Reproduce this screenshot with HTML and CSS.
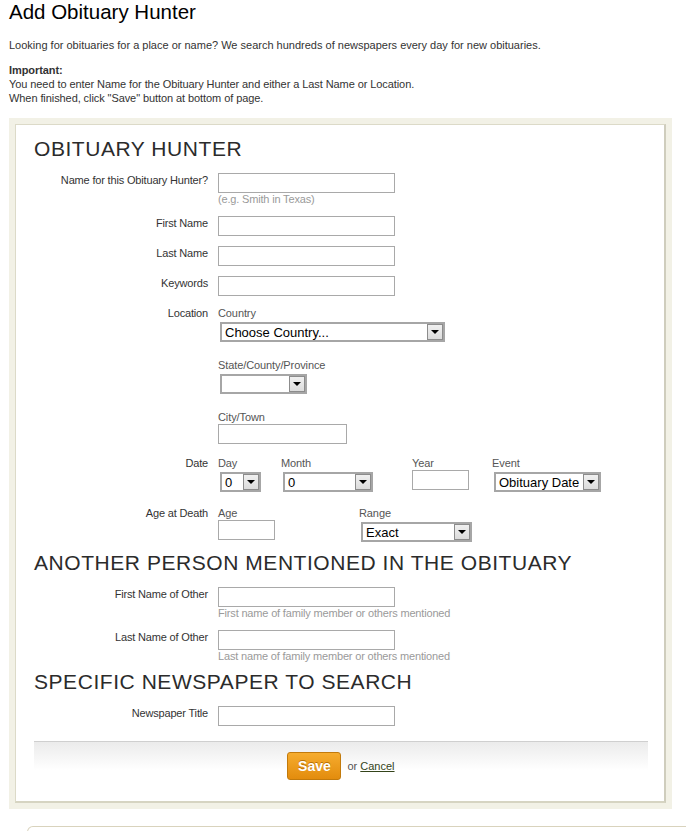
FILE: index.html
```html
<!DOCTYPE html>
<html lang="en">
<head>
<meta charset="utf-8">
<title>Add Obituary Hunter</title>
<link rel="stylesheet" href="styles.css">
</head>
<body>
<div class="page">
  <h1 class="title">Add Obituary Hunter</h1>
  <p class="intro">Looking for obituaries for a place or name? We search hundreds of newspapers every day for new obituaries.</p>
  <p class="important"><strong>Important:</strong><br>You need to enter Name for the Obituary Hunter and either a Last Name or Location.<br>When finished, click "Save" button at bottom of page.</p>

  <div class="frame">
    <div class="panel">
      <h2 class="sec">OBITUARY HUNTER</h2>

      <div class="row first">
        <label class="lbl">Name for this Obituary Hunter?</label>
        <div class="field">
          <input type="text" class="txt w-name">
          <div class="hint">(e.g. Smith in Texas)</div>
        </div>
      </div>

      <div class="row">
        <label class="lbl">First Name</label>
        <div class="field"><input type="text" class="txt w-name"></div>
      </div>

      <div class="row">
        <label class="lbl">Last Name</label>
        <div class="field"><input type="text" class="txt w-name"></div>
      </div>

      <div class="row">
        <label class="lbl">Keywords</label>
        <div class="field"><input type="text" class="txt w-name"></div>
      </div>

      <div class="row">
        <label class="lbl">Location</label>
        <div class="field">
          <div class="group">
            <div class="sub">Country</div>
            <span class="select w-country"><span class="val">Choose Country...</span><span class="btn"></span></span>
          </div>
          <div class="group gap">
            <div class="sub">State/County/Province</div>
            <span class="select w-state"><span class="val"></span><span class="btn"></span></span>
          </div>
          <div class="group gap">
            <div class="sub">City/Town</div>
            <input type="text" class="txt w-city">
          </div>
        </div>
      </div>

      <div class="row wide">
        <label class="lbl">Date</label>
        <div class="field cols">
          <div class="col c-day">
            <div class="sub">Day</div>
            <span class="select w-day"><span class="val">0</span><span class="btn"></span></span>
          </div>
          <div class="col c-month">
            <div class="sub">Month</div>
            <span class="select w-month"><span class="val">0</span><span class="btn"></span></span>
          </div>
          <div class="col c-year">
            <div class="sub">Year</div>
            <input type="text" class="txt w-year">
          </div>
          <div class="col">
            <div class="sub">Event</div>
            <span class="select w-event"><span class="val">Obituary Date</span><span class="btn"></span></span>
          </div>
        </div>
      </div>

      <div class="row wide">
        <label class="lbl">Age at Death</label>
        <div class="field cols">
          <div class="col c-age">
            <div class="sub">Age</div>
            <input type="text" class="txt w-age">
          </div>
          <div class="col">
            <div class="sub">Range</div>
            <span class="select w-range"><span class="val">Exact</span><span class="btn"></span></span>
          </div>
        </div>
      </div>

      <h2 class="sec next">ANOTHER PERSON MENTIONED IN THE OBITUARY</h2>

      <div class="row first">
        <label class="lbl">First Name of Other</label>
        <div class="field">
          <input type="text" class="txt w-name">
          <div class="hint">First name of family member or others mentioned</div>
        </div>
      </div>

      <div class="row">
        <label class="lbl">Last Name of Other</label>
        <div class="field">
          <input type="text" class="txt w-name">
          <div class="hint">Last name of family member or others mentioned</div>
        </div>
      </div>

      <h2 class="sec next">SPECIFIC NEWSPAPER TO SEARCH</h2>

      <div class="row first">
        <label class="lbl">Newspaper Title</label>
        <div class="field"><input type="text" class="txt w-name"></div>
      </div>

      <div class="actions">
        <button type="button" class="save">Save</button>
        <span class="or">or <a href="#" class="cancel">Cancel</a></span>
      </div>
    </div>
  </div>

  <div class="next-box"></div>
</div>
</body>
</html>
```

FILE: styles.css
```css
html, body {
  margin: 0;
  padding: 0;
  overflow: hidden;
  background: #fff;
}

body {
  font-family: "Liberation Sans", Arial, sans-serif;
  font-size: 11px;
  color: #333;
}

.page {
  padding-left: 9px;
}

.title {
  margin: 0;
  font-size: 20.5px;
  font-weight: normal;
  line-height: 24px;
  color: #000;
}

.intro {
  margin: 14px 0 0;
  line-height: 14px;
}

.important {
  margin: 11px 0 13px;
  line-height: 14px;
  letter-spacing: -0.08px;
}

.important strong {
  color: #333;
}

.frame {
  margin-right: 14px;
  padding: 6px;
  background: #f2f1e6;
}

.panel {
  background: #fff;
  border-top: 1px solid #dcdac8;
  border-left: 1px solid #dcdac8;
  border-right: 2px solid #cfcdbd;
  border-bottom: 2px solid #d6d4c2;
  padding: 12px 16px 21px 18px;
}

.sec {
  margin: 0;
  font-size: 21px;
  font-weight: normal;
  letter-spacing: 0.55px;
  line-height: 24px;
  color: #2b2b2b;
}

.sec.next {
  margin-top: 7px;
}

.row {
  display: grid;
  grid-template-columns: 174px 1fr;
  column-gap: 10px;
  margin-top: 10px;
}

.row.first {
  margin-top: 12px;
}

.row.wide {
  margin-top: 12px;
}

.lbl {
  text-align: right;
  line-height: 14px;
  color: #333;
  letter-spacing: -0.17px;
}

.field {
  min-width: 0;
}

.txt {
  display: block;
  box-sizing: border-box;
  height: 20px;
  margin: 0;
  padding: 0 3px;
  border: 1px solid #a9a9a9;
  background: #fff;
  font: 13px "Liberation Sans", Arial, sans-serif;
  outline: none;
}

.w-name { width: 177px; }
.w-city { width: 129px; }
.w-year { width: 57px; }
.w-age { width: 57px; }

.hint {
  line-height: 13px;
  color: #9a9a9a;
  letter-spacing: -0.17px;
}

.sub {
  line-height: 14px;
  color: #555;
  letter-spacing: -0.1px;
}

.group.gap {
  margin-top: 16px;
}

.select {
  display: flex;
  align-items: stretch;
  box-sizing: border-box;
  height: 20px;
  margin: 2px 0 2px 2px;
  border: 2px solid #a6a6a6;
  background: #fff;
  font-size: 13px;
  color: #000;
}

.select .val {
  flex: 1;
  padding-left: 3px;
  line-height: 17px;
  white-space: nowrap;
  overflow: hidden;
}

.select .btn {
  position: relative;
  width: 14px;
  margin: 0;
  border: 1px solid #8c8c8c;
  background: linear-gradient(#f0f0f0, #dcdcdc);
}

.select .btn::after {
  content: "";
  position: absolute;
  left: 3px;
  top: 5px;
  border-left: 4px solid transparent;
  border-right: 4px solid transparent;
  border-top: 4px solid #000;
}

.w-country { width: 225px; }
.w-state { width: 87px; }
.w-day { width: 41px; }
.w-month { width: 90px; }
.w-event { width: 107px; }
.w-range { width: 111px; }

.cols {
  display: flex;
  align-items: flex-start;
}

.c-day { width: 63px; }
.c-month { width: 131px; }
.c-year { width: 80px; }
.c-age { width: 141px; }

.actions {
  margin-top: 15px;
  border-top: 1px solid #cfcfcf;
  background: linear-gradient(#ebebeb, #ffffff 28px);
  padding-top: 10px;
  display: flex;
  justify-content: center;
  align-items: center;
  gap: 6px;
}

.save {
  box-sizing: border-box;
  width: 54px;
  height: 28px;
  padding: 0;
  border: 1px solid #c27a0c;
  border-radius: 3px;
  background: linear-gradient(#f6ac2e, #e38c0d);
  color: #fff;
  font: bold 14px "Liberation Sans", Arial, sans-serif;
  text-shadow: 0 -1px 0 #b86f05;
  cursor: pointer;
}

.or {
  color: #555;
  font-size: 11px;
  line-height: 14px;
}

.cancel {
  color: #34441a;
  text-decoration: underline;
}

.next-box {
  margin: 17px -30px 0 18px;
  height: 20px;
  border: 1px solid #d9d3bd;
  border-bottom: none;
  border-radius: 6px 6px 0 0;
}
```
